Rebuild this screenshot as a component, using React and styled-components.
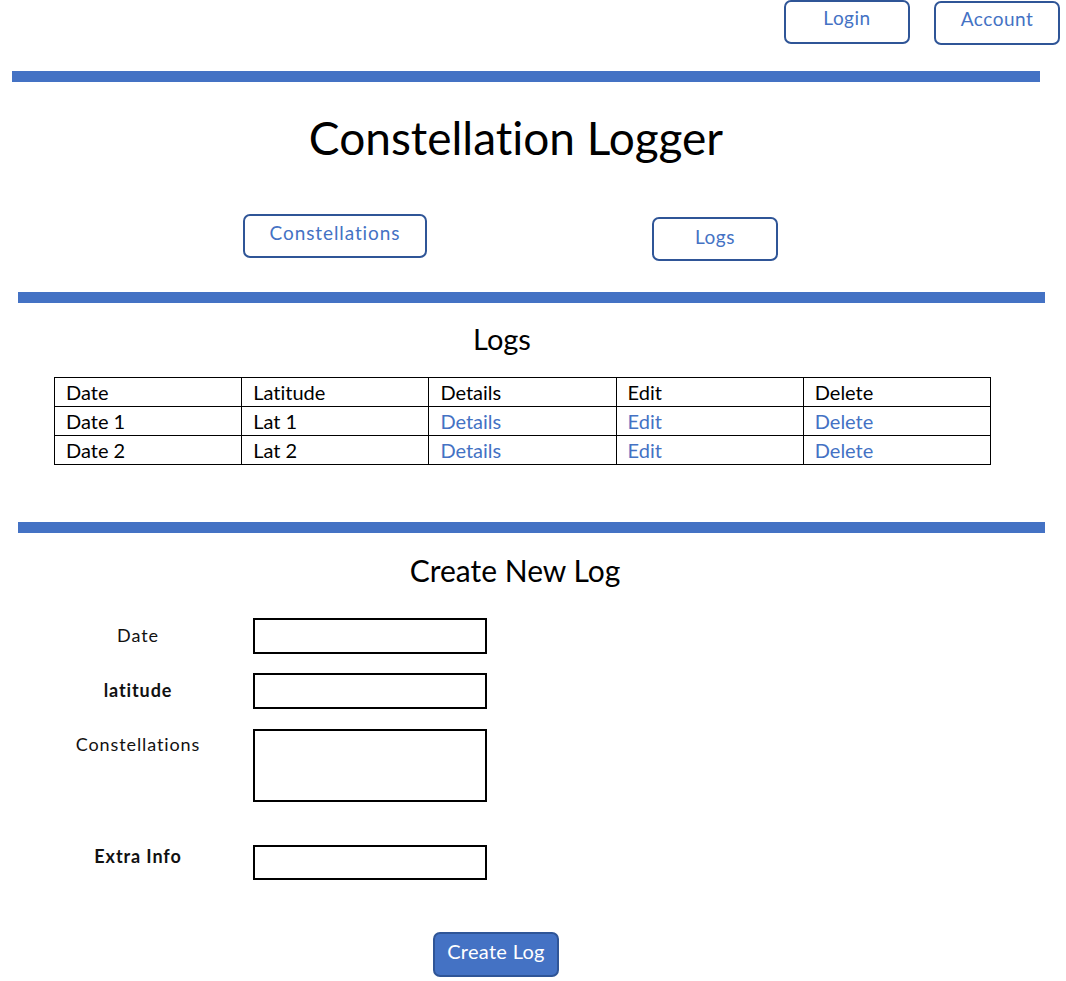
import React from 'react';
import styled, { createGlobalStyle } from 'styled-components';

const GlobalStyle = createGlobalStyle`
body {
	margin: 0;
	background: #ffffff;
	font-family: Lato, "Open Sans", sans-serif;
	font-variant-ligatures: none;
	color: #000000;
}
button {
	font-variant-ligatures: none;
}
`;

const Page = styled.div`
width: 1066px;
height: 981px;
position: relative;
overflow: hidden;
`;

const TopBar = styled.div`
display: flex;
justify-content: flex-end;
gap: 24px;
padding-right: 6px;
`;

const OutlineButton = styled.button`
width: ${props => props.w}px;
height: 44px;
margin-top: ${props => props.top || 0}px;
border: 2px solid #2f5597;
border-radius: 7px;
background: #ffffff;
color: #4472c4;
font-family: Lato, "Open Sans", sans-serif;
font-size: 19px;
letter-spacing: ${props => props.ls || 0.5}px;
padding: 0 0 ${props => props.pb || 6}px 0;
box-sizing: border-box;
cursor: pointer;
`;

const Divider = styled.div`
height: 11px;
background: #4472c4;
width: ${props => props.w}px;
margin-left: ${props => props.left}px;
margin-top: ${props => props.top}px;
`;

const Title = styled.h1`
margin: 0;
width: 1032px;
text-align: center;
font-weight: 400;
font-size: 46px;
line-height: 52px;
margin-top: ${props => props.top}px;
`;

const Nav = styled.div`
display: flex;
align-items: flex-start;
padding-left: 243px;
gap: 225px;
margin-top: 50px;
`;

const SectionTitle = styled.h2`
margin: 0;
font-weight: 400;
font-size: ${props => props.size}px;
line-height: 36px;
text-align: center;
width: ${props => props.w}px;
margin-top: ${props => props.top}px;
`;

const Table = styled.table`
border-collapse: collapse;
margin-left: 54px;
margin-top: 20px;
width: 937px;
table-layout: fixed;
`;

const Cell = styled.td`
border: 1.5px solid #000000;
height: 28px;
padding: 0 0 0 11px;
font-size: 20px;
line-height: 26px;
color: ${props => (props.link ? '#4472c4' : '#000000')};
`;

const Form = styled.div`
display: grid;
grid-template-columns: 168px 234px;
column-gap: 31px;
padding-left: 54px;
margin-top: 30px;
`;

const Label = styled.div`
text-align: center;
font-size: 18px;
letter-spacing: 0.9px;
font-weight: ${props => (props.bold ? 700 : 400)};
color: #111111;
align-self: start;
padding-top: ${props => props.pt}px;
margin-top: ${props => props.mt || 0}px;
`;

const Field = styled.div`
border: 2px solid #000000;
box-sizing: border-box;
height: ${props => props.h}px;
margin-top: ${props => props.mt || 0}px;
`;

const SubmitRow = styled.div`
padding-left: 433px;
margin-top: 52px;
`;

const SubmitButton = styled.button`
width: 126px;
height: 45px;
border: 2px solid #2f5597;
border-radius: 7px;
background: #4472c4;
color: #ffffff;
font-family: Lato, "Open Sans", sans-serif;
font-size: 20px;
letter-spacing: 0.3px;
padding: 0 0 7px 0;
box-sizing: border-box;
`;

const rows = [
	['Date 1', 'Lat 1'],
	['Date 2', 'Lat 2'],
];

const fields = [
	{ label: 'Date', h: 36, pt: 6, mt: 0 },
	{ label: 'latitude', h: 36, pt: 6, mt: 19, bold: true },
	{ label: 'Constellations', h: 73, pt: 4, mt: 20 },
	{ label: 'Extra Info', h: 35, pt: 0, mt: 43, bold: true },
];

const App = () => (
	<Page>
		<GlobalStyle />
		<TopBar>
			<OutlineButton w={126} pb={9}>Login</OutlineButton>
			<OutlineButton w={126} top={1} pb={9}>Account</OutlineButton>
		</TopBar>
		<Divider left={12} w={1028} top={26} />
		<Title top={30}>Constellation Logger</Title>
		<Nav>
			<OutlineButton w={184} ls={0.9} pb={8}>Constellations</OutlineButton>
			<OutlineButton w={126} top={3}>Logs</OutlineButton>
		</Nav>
		<Divider left={18} w={1027} top={31} />
		<SectionTitle size={29} w={1004} top={18}>Logs</SectionTitle>
		<Table>
			<tbody>
				<tr>
					<Cell>Date</Cell>
					<Cell>Latitude</Cell>
					<Cell>Details</Cell>
					<Cell>Edit</Cell>
					<Cell>Delete</Cell>
				</tr>
				{rows.map(r => (
					<tr key={r[0]}>
						<Cell>{r[0]}</Cell>
						<Cell>{r[1]}</Cell>
						<Cell link>Details</Cell>
						<Cell link>Edit</Cell>
						<Cell link>Delete</Cell>
					</tr>
				))}
			</tbody>
		</Table>
		<Divider left={18} w={1027} top={57} />
		<SectionTitle size={30} w={1030} top={19}>Create New Log</SectionTitle>
		<Form>
			{fields.map(f => (
				<React.Fragment key={f.label}>
					<Label bold={f.bold} pt={f.pt} mt={f.mt}>{f.label}</Label>
					<Field h={f.h} mt={f.mt} />
				</React.Fragment>
			))}
		</Form>
		<SubmitRow>
			<SubmitButton>Create Log</SubmitButton>
		</SubmitRow>
	</Page>
);

export default App;
